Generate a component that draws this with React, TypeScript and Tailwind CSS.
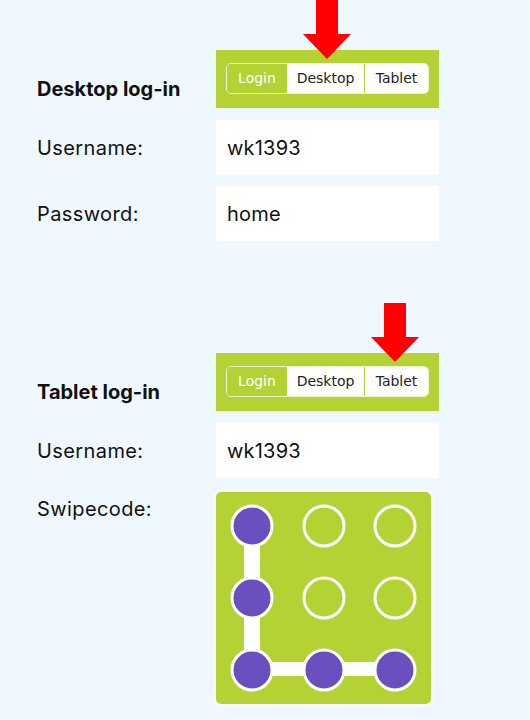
import React from "react";

function Arrow({ className }: { className: string }) {
  return (
    <svg className={className} width="48" height="59" viewBox="0 0 48 59">
      <polygon points="13,0 35,0 35,34 48,34 24,59 0,34 13,34" fill="#ff0000" />
    </svg>
  );
}

function Tabs() {
  return (
    <div
      className="flex h-[31px] w-[203px] overflow-hidden rounded-[5px] border border-[#eef4d2] text-[14px]"
      style={{ fontFamily: '"DejaVu Sans", Verdana, sans-serif' }}
    >
      <div className="flex w-[60px] items-center justify-center bg-[#b4d234] text-white">Login</div>
      <div className="flex w-[77px] items-center justify-center bg-white text-[#222]">Desktop</div>
      <div className="flex flex-1 items-center justify-center border-l border-[#b4d234] bg-white text-[#222]">
        Tablet
      </div>
    </div>
  );
}

function Bar({ arrow }: { arrow: "desktop" | "tablet" }) {
  return (
    <div className="relative h-[58px] w-[223px] bg-[#b4d234] pl-[10px] pt-[13px]">
      <Tabs />
      {arrow === "desktop" ? (
        <Arrow className="absolute left-[87px] top-[-50px]" />
      ) : (
        <Arrow className="absolute left-[155px] top-[-50px]" />
      )}
    </div>
  );
}

function Field({ value }: { value: string }) {
  return (
    <div className="flex h-[55px] w-[223px] items-center bg-white pl-[11px] text-[20px] tracking-[0.01em] text-[#111]">
      {value}
    </div>
  );
}

function Swipe() {
  const xs = [36, 108, 179];
  const ys = [34, 106, 178];
  const filled = new Set(["0-0", "0-1", "0-2", "1-2", "2-2"]);
  return (
    <div className="-ml-[2px] h-[216px] w-[219px] rounded-[7px] border-2 border-white bg-[#b4d234]">
      <svg width="215" height="212" viewBox="0 0 215 212">
        <rect x="28" y="34" width="16" height="144" fill="#fff" />
        <rect x="36" y="170" width="143" height="14" fill="#fff" />
        {ys.map((cy, r) =>
          xs.map((cx, c) => {
            const on = filled.has(`${c}-${r}`);
            return (
              <circle
                key={`${c}-${r}`}
                cx={cx}
                cy={cy}
                r={20}
                fill={on ? "#6a4fbe" : "none"}
                stroke="#fff"
                strokeWidth={3}
              />
            );
          })
        )}
      </svg>
    </div>
  );
}

export default function App() {
  return (
    <div
      className="min-h-[720px] w-full bg-[#eef8fe] pl-[37px] pt-[50px] text-[#111]"
      style={{ fontFamily: 'Inter, "Noto Sans", sans-serif' }}
    >
      <div className="flex">
        <div className="w-[179px] pt-[27px] text-[20px] font-bold leading-[24px]">Desktop log-in</div>
        <Bar arrow="desktop" />
      </div>
      <div className="mt-[12px] flex items-center">
        <div className="w-[179px] pt-[1px] text-[20px] leading-[24px] tracking-[0.02em]">Username:</div>
        <Field value="wk1393" />
      </div>
      <div className="mt-[11px] flex items-center">
        <div className="w-[179px] pt-[1px] text-[20px] leading-[24px] tracking-[0.02em]">Password:</div>
        <Field value="home" />
      </div>

      <div className="mt-[112px] flex">
        <div className="w-[179px] pt-[27px] text-[20px] font-bold leading-[24px]">Tablet log-in</div>
        <Bar arrow="tablet" />
      </div>
      <div className="mt-[12px] flex items-center">
        <div className="w-[179px] pt-[1px] text-[20px] leading-[24px] tracking-[0.02em]">Username:</div>
        <Field value="wk1393" />
      </div>
      <div className="mt-[12px] flex">
        <div className="w-[179px] pt-[7px] text-[20px] leading-[24px] tracking-[0.02em]">Swipecode:</div>
        <Swipe />
      </div>
    </div>
  );
}
